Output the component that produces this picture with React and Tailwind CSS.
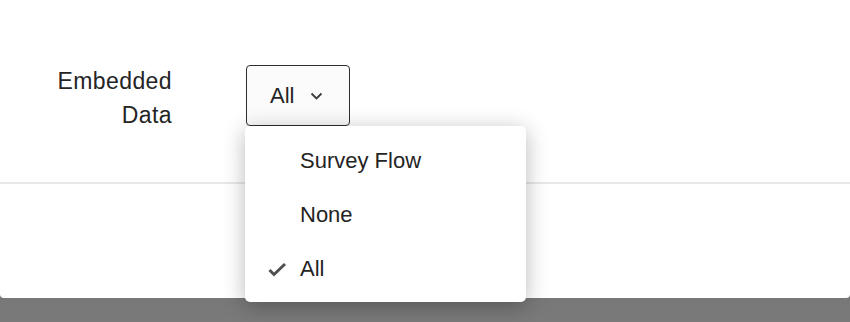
export default function App() {
  const options = [
    { id: "flow", label: "Survey Flow", checked: false },
    { id: "none", label: "None", checked: false },
    { id: "all", label: "All", checked: true },
  ];

  return (
    <div
      className="relative w-[850px] h-[322px] overflow-hidden bg-gradient-to-b from-[#5c5c5c] to-[#7a7a7a] text-[#242424]"
      style={{ fontFamily: '"Liberation Sans", Arial, sans-serif' }}
    >
      {/* Panel */}
      <div className="h-[298px] bg-white rounded-b-[4px] flex flex-col">
        <div className="flex items-start pt-[64px] h-[182px]">
          <div className="w-[172px] text-right text-[23px] leading-[34px] tracking-[0.4px]">
            Embedded
            <br />
            Data
          </div>
          <button className="ml-[74px] mt-px w-[104px] h-[61px] flex items-center border-[1.5px] border-[#2e2e2e] rounded-[4px] bg-[#fbfbfb] pl-[23px]">
            <span className="text-[22px] leading-none">All</span>
            <svg
              viewBox="0 0 13 8"
              className="ml-[16px] w-[13px] h-[8px]"
              fill="none"
              stroke="#3a3a3a"
              strokeWidth="1.8"
            >
              <path d="M1.5 1.5l5 5 5-5" />
            </svg>
          </button>
        </div>
        <div className="h-[2px] bg-[#e8e8e8]" />
      </div>

      {/* Dropdown menu */}
      <div className="absolute left-[245px] top-[126px] w-[281px] h-[176px] bg-white rounded-[5px] shadow-[0_4px_22px_rgba(0,0,0,0.28)] pt-[8px]">
        {options.map((opt) => (
          <div key={opt.id} className="h-[54px] flex items-center">
            <div className="w-[55px] flex justify-end pr-[13px]">
              {opt.checked && (
                <svg
                  viewBox="0 0 20 16"
                  className="w-[20px] h-[16px]"
                  fill="none"
                  stroke="#505050"
                  strokeWidth="3"
                >
                  <path d="M2.5 9l4.5 4.5L18 3" />
                </svg>
              )}
            </div>
            <span className="text-[22px] leading-none">{opt.label}</span>
          </div>
        ))}
      </div>
    </div>
  );
}
